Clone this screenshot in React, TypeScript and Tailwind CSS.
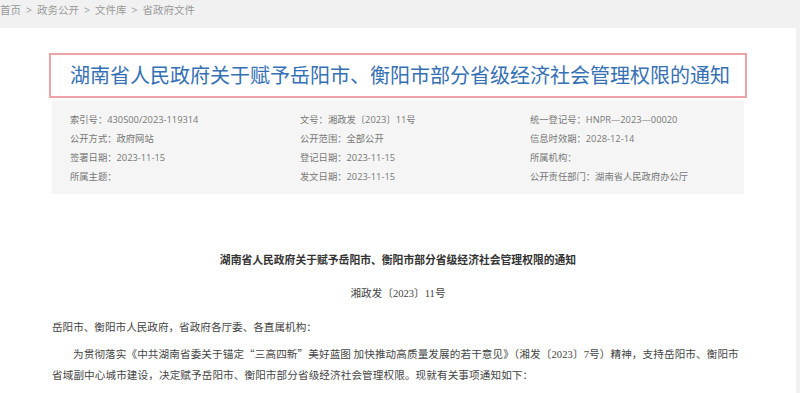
const meta: [string, string][] = [
  ["索引号：", "430S00/2023-119314"],
  ["文号：", "湘政发〔2023〕11号"],
  ["统一登记号：", "HNPR—2023—00020"],
  ["公开方式：", "政府网站"],
  ["公开范围：", "全部公开"],
  ["信息时效期：", "2028-12-14"],
  ["签署日期：", "2023-11-15"],
  ["登记日期：", "2023-11-15"],
  ["所属机构：", ""],
  ["所属主题：", ""],
  ["发文日期：", "2023-11-15"],
  ["公开责任部门：", "湖南省人民政府办公厅"],
];

const sans = "font-['Open_Sans','Noto_Sans_CJK_SC',sans-serif]";
const cjk = "font-['Noto_Sans_CJK_SC',serif]";
const num = "font-['Liberation_Serif',serif]";

export default function App() {
  return (
    <div className={`min-h-[393px] w-[800px] bg-[#f1f1f1] ${sans}`}>
      {/* breadcrumb */}
      <div className="flex h-[28px] gap-[5px] pt-[3px] text-[10.5px] leading-[14px] text-[#999]">
        <span>首页</span>
        <span>&gt;</span>
        <span>政务公开</span>
        <span>&gt;</span>
        <span>文件库</span>
        <span>&gt;</span>
        <span>省政府文件</span>
      </div>

      <div className="h-[365px] w-[796px] overflow-hidden bg-white pt-[25px]">
        <div className="mx-[52px]">
          <div className="-mx-[3px] flex h-[45px] items-center border-2 border-[#f0a3a6] pl-[19px] text-[20px] leading-[26px] text-[#3470b4]">
            湖南省人民政府关于赋予岳阳市、衡阳市部分省级经济社会管理权限的通知
          </div>

          <div className="mt-[2px] grid grid-cols-[230px_230px_1fr] bg-[#f5f5f5] pb-[8px] pl-[18px] pt-[10px] text-[9.3px] leading-[19px] text-[#777]">
            {meta.map(([k, v], i) => (
              <div key={i} className="whitespace-nowrap">
                {k}
                {v}
              </div>
            ))}
          </div>

          <div className={`${cjk} text-[10.6px] leading-[20px] text-[#444]`}>
            <h1 className="mt-[55px] text-center text-[10.8px] font-bold text-[#333]">
              湖南省人民政府关于赋予岳阳市、衡阳市部分省级经济社会管理权限的通知
            </h1>
            <p className="mt-[14px] text-center">
              湘政发〔<span className={num}>2023</span>〕<span className={num}>11</span>号
            </p>
            <p className="mt-[13px]">岳阳市、衡阳市人民政府，省政府各厅委、各直属机构：</p>
            <p className="mt-[7px] indent-[21px] tracking-[0.1px]">
              为贯彻落实《中共湖南省委关于锚定“三高四新”美好蓝图 加快推动高质量发展的若干意见》（湘发〔<span className={num}>2023</span>〕<span className={num}>7</span>号）精神，支持岳阳市、衡阳市省域副中心城市建设，决定赋予岳阳市、衡阳市部分省级经济社会管理权限。现就有关事项通知如下：
            </p>
          </div>
        </div>
      </div>
    </div>
  );
}
